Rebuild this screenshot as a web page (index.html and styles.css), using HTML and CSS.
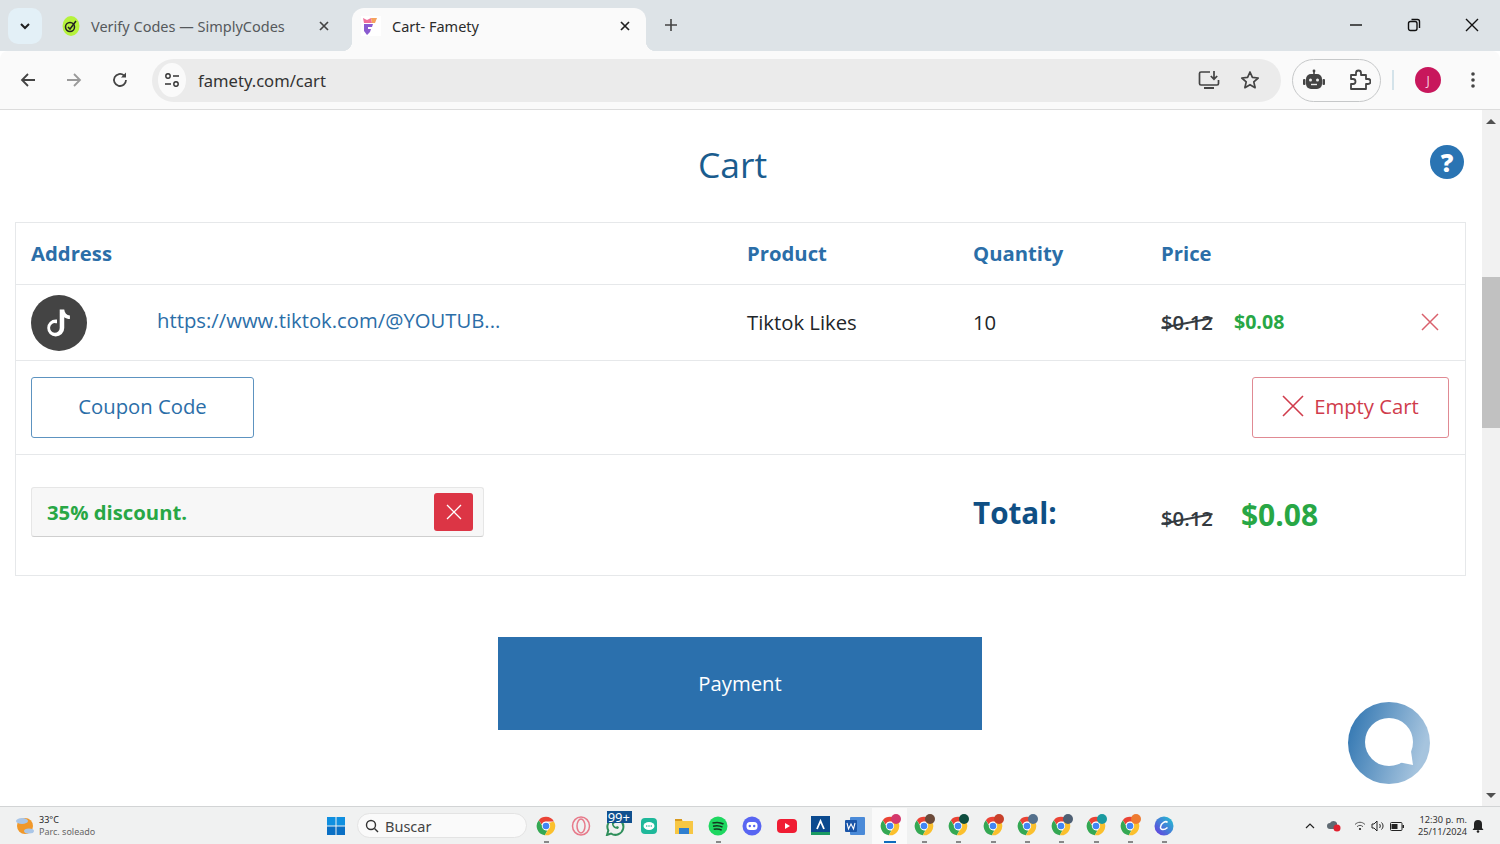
FILE: index.html
```html
<!DOCTYPE html>
<html lang="en">
<head>
    <meta charset="UTF-8">
    <meta name="viewport" content="width=device-width, initial-scale=1.0">
    <title>Cart- Famety</title>
    <link rel="stylesheet" href="styles.css">
</head>
<body>
    <svg class="defs" width="0" height="0">
        <symbol id="chrome" viewBox="0 0 24 24">
            <path fill="#ea4335" d="M12 1a11 11 0 0 1 9.5 5.5H12a5.5 5.5 0 0 0-5.2 3.7L3.4 5A11 11 0 0 1 12 1z"/>
            <path fill="#34a853" d="M3.4 5l4.9 8.6a4.5 4.5 0 0 0 5.3 3.8L10.6 23A11 11 0 0 1 3.4 5z"/>
            <path fill="#fbc02d" d="M21.5 6.500A11 11 0 0 1 10.600 23l4.800-8.400a4.500 4.500 0 0 0-.2-6.100z"/>
            <circle cx="12" cy="12" r="5" fill="#fff"/>
            <circle cx="12" cy="12" r="4" fill="#4285f4"/>
        </symbol>
    </svg>

    <!-- Tab strip -->
    <div class="tabstrip">
        <button class="tab-search">
            <svg width="12" height="12" viewBox="0 0 12 12"><path d="M2 4l4 4 4-4" fill="none" stroke="#1f1f1f" stroke-width="2"/></svg>
        </button>
        <div class="tab">
            <svg class="favicon" viewBox="0 0 20 20"><ellipse cx="10" cy="10" rx="8.500" ry="10" fill="#b5f23c"/><circle cx="9" cy="11" r="4.500" fill="none" stroke="#222" stroke-width="1.500"/><path d="M7 11l2 2 6-8" fill="none" stroke="#222" stroke-width="1.500"/></svg>
            <span class="tab-title">Verify Codes — SimplyCodes</span>
            <svg class="tab-close" viewBox="0 0 12 12"><path d="M2 2l8 8M10 2l-8 8" stroke="#444" stroke-width="1.700"/></svg>
        </div>
        <div class="tab active">
            <svg class="favicon" viewBox="0 0 20 20"><rect width="20" height="20" fill="#fff"/><path d="M3 8h9l-1 3H7v2h3l-1 3-3 3-3-4z" fill="#8a5bd0"/><path d="M2 2l4 2 4-2 1 5H3z" fill="#f0709a"/><path d="M10 2h6l-2 5h-3z" fill="#f5a25d"/></svg>
            <span class="tab-title">Cart- Famety</span>
            <svg class="tab-close" viewBox="0 0 12 12"><path d="M2 2l8 8M10 2l-8 8" stroke="#222" stroke-width="1.700"/></svg>
        </div>
        <svg class="new-tab" viewBox="0 0 14 14"><path d="M7 1v12M1 7h12" stroke="#444" stroke-width="1.600"/></svg>
        <div class="window-controls">
            <svg viewBox="0 0 14 14"><path d="M1 7h12" stroke="#111" stroke-width="1.400"/></svg>
            <svg viewBox="0 0 14 14"><rect x="1.500" y="3.500" width="8.500" height="9" rx="2" fill="none" stroke="#111" stroke-width="1.400"/><path d="M4.500 1.500h6a2 2 0 0 1 2 2v6.500" fill="none" stroke="#111" stroke-width="1.400"/></svg>
            <svg viewBox="0 0 14 14"><path d="M1 1l12 12M13 1L1 13" stroke="#111" stroke-width="1.400"/></svg>
        </div>
    </div>

    <!-- Toolbar -->
    <div class="toolbar">
        <svg class="nav-icon" viewBox="0 0 18 18"><path d="M16 9H3M9 3L3 9l6 6" fill="none" stroke="#444" stroke-width="1.800"/></svg>
        <svg class="nav-icon" viewBox="0 0 18 18"><path d="M2 9h13M9 3l6 6-6 6" fill="none" stroke="#9a9a9a" stroke-width="1.800"/></svg>
        <svg class="nav-icon" viewBox="0 0 18 18"><path d="M15 9a6 6 0 1 1-2-4.500" fill="none" stroke="#444" stroke-width="1.800"/><path d="M15 1.500v5h-5z" fill="#444"/></svg>
        <div class="omnibox">
            <span class="site-info">
                <svg width="16" height="16" viewBox="0 0 16 16"><circle cx="4" cy="4" r="2.200" fill="none" stroke="#333" stroke-width="1.400"/><path d="M9 4h6M1 12h6" stroke="#333" stroke-width="1.600"/><circle cx="12" cy="12" r="2.200" fill="none" stroke="#333" stroke-width="1.400"/></svg>
            </span>
            <span class="url">famety.com/cart</span>
            <svg class="omni-icon install" viewBox="0 0 22 20"><path d="M12 2H3a1.500 1.500 0 0 0-1.500 1.500v10A1.500 1.500 0 0 0 3 15h16a1.500 1.500 0 0 0 1.500-1.500V10" fill="none" stroke="#444" stroke-width="1.700"/><path d="M6 18h10" stroke="#444" stroke-width="2"/><path d="M16 1v8M12.800 6l3.200 3.200L19.200 6" fill="none" stroke="#444" stroke-width="1.700"/></svg>
            <svg class="omni-icon" viewBox="0 0 20 20"><path d="M10 2l2.400 5.400 5.800.6-4.400 3.900 1.300 5.800L10 14.700l-5.100 3 1.300-5.800L1.800 8l5.800-.6z" fill="none" stroke="#444" stroke-width="1.700" stroke-linejoin="round"/></svg>
        </div>
        <div class="ext-pill">
            <svg width="22" height="22" viewBox="0 0 22 22"><path d="M11 1v4" stroke="#444" stroke-width="1.600"/><circle cx="11" cy="2" r="1.400" fill="#444"/><rect x="3" y="5" width="16" height="15" rx="5" fill="#444"/><rect x="0" y="10" width="2.500" height="6" rx="1" fill="#444"/><rect x="19.500" y="10" width="2.500" height="6" rx="1" fill="#444"/><circle cx="7.500" cy="11" r="1.500" fill="#eee"/><circle cx="14.500" cy="11" r="1.500" fill="#eee"/><path d="M8 15.500h6" stroke="#eee" stroke-width="1.400"/></svg>
            <svg width="22" height="22" viewBox="0 0 22 22"><path d="M2 6h5V4a2.500 2.500 0 0 1 5 0v2h5v4h2a2.500 2.500 0 0 1 0 5h-2v5H2v-5h2a2.500 2.500 0 0 0 0-5H2z" fill="none" stroke="#444" stroke-width="1.800" stroke-linejoin="round"/></svg>
        </div>
        <span class="divider"></span>
        <span class="avatar">J</span>
        <svg class="menu-dots" viewBox="0 0 4 18"><circle cx="2" cy="3" r="1.800" fill="#444"/><circle cx="2" cy="9" r="1.800" fill="#444"/><circle cx="2" cy="15" r="1.800" fill="#444"/></svg>
    </div>

    <!-- Page -->
    <div class="viewport">
        <main class="page">
            <h1 class="page-title">Cart</h1>
            <a class="help" href="#">?</a>

            <div class="cart">
                <div class="row head">
                    <div>Address</div>
                    <div>Product</div>
                    <div>Quantity</div>
                    <div>Price</div>
                </div>
                <div class="row item">
                    <div class="address">
                        <span class="tiktok">
                            <svg width="34" height="34" viewBox="0 0 24 24"><path d="M12.500 2.500h3.200c.2 2.400 1.700 4 4 4.200v2.500c-1.500 0-2.900-.5-4-1.300v7.600a6 6 0 1 1-6-6h.9v2.600h-.9a3.400 3.400 0 1 0 2.800 3.400z" fill="#fff"/></svg>
                        </span>
                        <a class="link" href="#">https://www.tiktok.com/@YOUTUB...</a>
                    </div>
                    <div class="cell">Tiktok Likes</div>
                    <div class="cell">10</div>
                    <div class="cell price">
                        <span class="old-price">$0.12</span>
                        <span class="new-price">$0.08</span>
                        <svg class="remove" viewBox="0 0 20 20"><path d="M2 2l16 16M18 2L2 18" stroke="#d9606c" stroke-width="1.500"/></svg>
                    </div>
                </div>
                <div class="actions">
                    <button class="btn btn-coupon">Coupon Code</button>
                    <button class="btn btn-empty">
                        <svg width="22" height="22" viewBox="0 0 22 22"><path d="M1 1l20 20M21 1L1 21" stroke="#d03c4c" stroke-width="1.600"/></svg>
                        Empty Cart
                    </button>
                </div>
                <div class="row totals">
                    <div class="discount">
                        <span>35% discount.</span>
                        <button class="discount-x">
                            <svg width="16" height="16" viewBox="0 0 16 16"><path d="M1 1l14 14M15 1L1 15" stroke="#fff" stroke-width="1.300"/></svg>
                        </button>
                    </div>
                    <div></div>
                    <div class="total-label">Total:</div>
                    <div class="price total-price">
                        <span class="old-price">$0.12</span>
                        <span class="grand-price">$0.08</span>
                    </div>
                </div>
            </div>

            <button class="payment">Payment</button>

            <a class="chat" href="#">
                <svg width="82" height="82" viewBox="0 0 82 82">
                    <defs>
                        <linearGradient id="chatFill" x1="0" y1="0" x2="1" y2="0.300">
                            <stop offset="0" stop-color="#2b72af"/>
                            <stop offset="1" stop-color="#a6c4de"/>
                        </linearGradient>
                    </defs>
                    <circle cx="41" cy="41" r="41" fill="url(#chatFill)"/>
                    <circle cx="41" cy="40" r="24" fill="#fff"/>
                    <path d="M62 42l3 21-20-4z" fill="#fff"/>
                </svg>
            </a>
        </main>
        <div class="scrollbar">
            <span class="arrow-up"></span>
            <div class="track"><div class="thumb"></div></div>
            <span class="arrow-down"></span>
        </div>
    </div>

    <!-- Taskbar -->
    <footer class="taskbar">
        <div class="weather">
            <svg width="20" height="20" viewBox="0 0 20 20"><circle cx="10" cy="10" r="8" fill="#f0982a"/><ellipse cx="7" cy="5" rx="6" ry="3" fill="#a9c6e8"/><ellipse cx="14" cy="15" rx="5" ry="2.500" fill="#a9c6e8"/></svg>
            <div class="weather-text"><span class="temp">33°C</span><span>Parc. soleado</span></div>
        </div>
        <svg class="win-logo" viewBox="0 0 18 18"><g fill="#0f8fe0"><rect width="8.500" height="8.500"/><rect x="9.500" width="8.500" height="8.500"/><rect y="9.500" width="8.500" height="8.500" fill="#0a6fc4"/><rect x="9.500" y="9.500" width="8.500" height="8.500" fill="#0a6fc4"/></g></svg>
        <div class="search-box">
            <svg width="14" height="14" viewBox="0 0 14 14"><circle cx="6" cy="6" r="4.500" fill="none" stroke="#333" stroke-width="1.400"/><path d="M9.500 9.500L13 13" stroke="#333" stroke-width="1.400"/></svg>
            <span>Buscar</span>
        </div>
        <div class="task-icons">
            <span class="task-icon open"><svg width="20" height="20"><use href="#chrome"/></svg></span>
            <span class="task-icon"><svg width="20" height="20" viewBox="0 0 20 20"><ellipse cx="10" cy="10" rx="8.500" ry="9" fill="none" stroke="#e77a8a" stroke-width="1.500"/><ellipse cx="10" cy="10" rx="4" ry="7" fill="none" stroke="#e77a8a" stroke-width="1.500"/></svg></span>
            <span class="task-icon"><svg width="20" height="20" viewBox="0 0 20 20"><path d="M2 19l1.300-4.500A8 8 0 1 1 6 17.500z" fill="none" stroke="#2f8f5b" stroke-width="2"/><path d="M7 7c-.5 3 2.500 6 6 6l1-2-2-1-1 1c-1-.5-2-1.500-2.500-2.500l1-1-1-2z" fill="#2f8f5b"/></svg><b class="badge">99+</b></span>
            <span class="task-icon"><svg width="18" height="18" viewBox="0 0 18 18"><rect width="16" height="16" x="1" y="1" rx="4" fill="#1eb89a"/><ellipse cx="9" cy="9" rx="5.500" ry="4" fill="#fff"/><circle cx="6.700" cy="9" r=".8" fill="#1eb89a"/><circle cx="9" cy="9" r=".8" fill="#1eb89a"/><circle cx="11.300" cy="9" r=".8" fill="#1eb89a"/></svg></span>
            <span class="task-icon"><svg width="20" height="18" viewBox="0 0 20 18"><path d="M1 2h6l2 2h10v13H1z" fill="#f7c744"/><rect x="1" y="2" width="7" height="2" fill="#d99a1e"/><rect x="5" y="11" width="10" height="6" fill="#2f7fd0"/></svg></span>
            <span class="task-icon open"><svg width="20" height="20" viewBox="0 0 20 20"><circle cx="10" cy="10" r="9.500" fill="#1ed760"/><path d="M4.500 7c4-1 8-.7 11 1M5 10.200c3.500-.8 7-.5 9.500 1M5.700 13.200c3-.6 5.700-.4 8 .9" fill="none" stroke="#14341f" stroke-width="1.500"/></svg></span>
            <span class="task-icon"><svg width="20" height="20" viewBox="0 0 20 20"><circle cx="10" cy="10" r="9.500" fill="#5865f2"/><rect x="4.500" y="6" width="11" height="8" rx="3.500" fill="#fff"/><circle cx="7.800" cy="10" r="1.200" fill="#5865f2"/><circle cx="12.200" cy="10" r="1.200" fill="#5865f2"/></svg></span>
            <span class="task-icon"><svg width="20" height="14" viewBox="0 0 20 14"><rect width="20" height="14" rx="4" fill="#f01c33"/><path d="M8 4l5 3-5 3z" fill="#fff"/></svg></span>
            <span class="task-icon"><svg width="19" height="19" viewBox="0 0 19 19"><rect width="19" height="19" fill="#0b4a8f"/><rect y="16" width="19" height="3" fill="#1a9a62"/><path d="M6 13l3.500-8L13 13" fill="none" stroke="#fff" stroke-width="1.800"/></svg></span>
            <span class="task-icon"><svg width="20" height="18" viewBox="0 0 20 18"><rect x="5" y="0" width="15" height="18" rx="1" fill="#4a8ad8"/><rect x="0" y="3" width="12" height="12" rx="1" fill="#1a55a8"/><path d="M2 6l1.500 6L6 7l2.500 5L10 6" fill="none" stroke="#fff" stroke-width="1.100"/></svg></span>
            <span class="task-icon active"><svg width="20" height="20"><use href="#chrome"/></svg><i class="mini" style="background:#d4386c"></i></span>
            <span class="task-icon open"><svg width="20" height="20"><use href="#chrome"/></svg><i class="mini" style="background:#6b4a3a"></i></span>
            <span class="task-icon open"><svg width="20" height="20"><use href="#chrome"/></svg><i class="mini" style="background:#0e4d3f"></i></span>
            <span class="task-icon open"><svg width="20" height="20"><use href="#chrome"/></svg><i class="mini" style="background:#c8402a"></i></span>
            <span class="task-icon open"><svg width="20" height="20"><use href="#chrome"/></svg><i class="mini" style="background:#54708c"></i></span>
            <span class="task-icon open"><svg width="20" height="20"><use href="#chrome"/></svg><i class="mini" style="background:#4e5f73"></i></span>
            <span class="task-icon open"><svg width="20" height="20"><use href="#chrome"/></svg><i class="mini" style="background:#1a9aa0"></i></span>
            <span class="task-icon open"><svg width="20" height="20"><use href="#chrome"/></svg><i class="mini" style="background:#ee7a30"></i></span>
            <span class="task-icon open"><svg width="20" height="20" viewBox="0 0 20 20"><defs><linearGradient id="canva" x1="0" y1="1" x2="1" y2="0"><stop offset="0" stop-color="#6a35e0"/><stop offset="1" stop-color="#1ec8d0"/></linearGradient></defs><circle cx="10" cy="10" r="9.500" fill="url(#canva)"/><path d="M13.500 6.500C12 4.500 7 6.500 6.500 11c-.3 3 3.500 3.500 7 .5" fill="none" stroke="#fff" stroke-width="1.500"/></svg></span>
        </div>
        <div class="tray">
            <svg width="10" height="6" viewBox="0 0 10 6"><path d="M1 5l4-4 4 4" fill="none" stroke="#222" stroke-width="1.200"/></svg>
            <svg class="tray-cloud" width="14" height="12" viewBox="0 0 14 12"><path d="M3 9a3 3 0 0 1 0-6 4 4 0 0 1 7 0v6z" fill="#5f6a72"/><circle cx="10" cy="8" r="3.500" fill="#e0212f"/></svg>
            <svg class="tray-wifi" width="12" height="10" viewBox="0 0 12 10"><path d="M1 3.500c3-3 7-3 10 0M3 5.700c2-1.800 4-1.800 6 0" fill="none" stroke="#555" stroke-width="1"/><circle cx="6" cy="8" r="1.100" fill="#222"/></svg>
            <svg class="tray-next" width="14" height="12" viewBox="0 0 14 12"><path d="M1 4h2l3-3v10L3 8H1z" fill="none" stroke="#222"/><path d="M8.500 4c1 1 1 3 0 4M10.500 2.500c2 2 2 5 0 7" fill="none" stroke="#222"/></svg>
            <svg class="tray-next" width="14" height="10" viewBox="0 0 14 10"><rect x=".5" y="1.500" width="11.500" height="8" rx="1" fill="none" stroke="#222"/><rect x="1.500" y="3" width="6" height="5" fill="#222"/><rect x="12.500" y="4" width="1.500" height="3" fill="#222"/></svg>
            <div class="clock"><span>12:30 p. m.</span><span>25/11/2024</span></div>
            <svg class="tray-next" width="12" height="14" viewBox="0 0 12 14"><path d="M6 1a4 4 0 0 0-4 4v4l-1.500 2h11L10 9V5a4 4 0 0 0-4-4z" fill="#222"/><circle cx="6" cy="12.500" r="1.300" fill="#222"/></svg>
        </div>
    </footer>
</body>
</html>
```

FILE: styles.css
```css
/* General Reset */
* {
    margin: 0;
    padding: 0;
    box-sizing: border-box;
}

html, body {
    height: 100%;
    overflow: hidden;
}

body {
    display: flex;
    flex-direction: column;
    font-family: 'Open Sans', sans-serif;
    background: #fff;
    color: #212529;
}

button {
    font-family: inherit;
    cursor: pointer;
    background: none;
    border: none;
}

a {
    text-decoration: none;
}

.defs {
    position: absolute;
}

/* Tab strip */
.tabstrip {
    height: 51px;
    flex: none;
    display: flex;
    align-items: flex-end;
    padding-left: 8px;
    background: #dde3e7;
    font-family: 'Noto Sans', sans-serif;
}

.tab-search {
    width: 34px;
    height: 36px;
    margin-bottom: 7px;
    border-radius: 10px;
    background: #e3f0f7;
    display: flex;
    align-items: center;
    justify-content: center;
}

.tab {
    width: 292px;
    height: 43px;
    margin-left: 10px;
    display: flex;
    align-items: center;
    gap: 10px;
    padding: 0 14px 7px 9px;
    font-size: 14.500px;
    color: #55595c;
    position: relative;
}

.tab.active {
    width: 294px;
    margin-left: 8px;
    background: #fafafa;
    color: #2b2b2b;
    border-radius: 12px 12px 0 0;
    padding-left: 9px;
    padding-right: 15px;
    gap: 11px;
}

.tab.active::before,
.tab.active::after {
    content: '';
    position: absolute;
    bottom: 0;
    width: 10px;
    height: 10px;
}

.tab.active::before {
    left: -10px;
    background: radial-gradient(circle at 0 0, #dde3e7 10px, #fafafa 10.500px);
}

.tab.active::after {
    right: -10px;
    background: radial-gradient(circle at 100% 0, #dde3e7 10px, #fafafa 10.500px);
}

.favicon {
    width: 20px;
    height: 20px;
    flex: none;
}

.tab-title {
    flex: 1;
    white-space: nowrap;
}

.tab-close {
    width: 12px;
    height: 12px;
    flex: none;
}

.new-tab {
    width: 14px;
    height: 14px;
    margin: 0 0 19px 18px;
}

.window-controls {
    margin-left: auto;
    margin-bottom: 19px;
    margin-right: 21px;
    display: flex;
    gap: 44px;
}

.window-controls svg {
    width: 14px;
    height: 14px;
}

/* Toolbar */
.toolbar {
    height: 59px;
    flex: none;
    display: flex;
    align-items: center;
    padding: 0 19px 0 19px;
    background: #fafafa;
    border-bottom: 1px solid #dcdcdc;
    border-radius: 8px 8px 0 0;
}

.nav-icon {
    width: 18px;
    height: 18px;
    margin-right: 28px;
    flex: none;
}

.omnibox {
    width: 1129px;
    height: 43px;
    margin-left: -5px;
    display: flex;
    align-items: center;
    padding: 0 21px 0 6px;
    border-radius: 22px;
    background: #ebebeb;
}

.site-info {
    width: 28px;
    height: 34px;
    border-radius: 50%;
    background: #fafafa;
    display: flex;
    align-items: center;
    justify-content: center;
}

.url {
    margin-left: 12px;
    flex: 1;
    font-size: 16.600px;
    font-family: 'Noto Sans', sans-serif;
    color: #333;
}

.omni-icon {
    width: 20px;
    height: 20px;
}

.install {
    width: 22px;
    margin-right: 20px;
}

.ext-pill {
    width: 89px;
    height: 43px;
    margin-left: 11px;
    flex: none;
    border: 1px solid #c6c8c9;
    border-radius: 22px;
    display: flex;
    align-items: center;
    justify-content: space-between;
    padding: 0 9px 0 10px;
}

.divider {
    width: 2px;
    height: 20px;
    margin-left: 11px;
    background: #d4e3ea;
    flex: none;
}

.avatar {
    width: 26px;
    height: 26px;
    margin-left: 21px;
    flex: none;
    border-radius: 50%;
    background: #c8175c;
    color: #f6d5e2;
    font-size: 12px;
    display: flex;
    align-items: center;
    justify-content: center;
}

.menu-dots {
    width: 4px;
    height: 18px;
    margin-left: 30px;
    flex: none;
}

/* Page */
.viewport {
    flex: 1;
    min-height: 0;
    display: flex;
}

.page {
    flex: 1;
    position: relative;
    padding: 0 16px 0 15px;
}

.page-title {
    margin-top: 29px;
    height: 83px;
    padding-right: 16px;
    font-size: 35.500px;
    font-weight: 400;
    line-height: 50px;
    text-align: center;
    color: #1a5c8e;
}

.help {
    position: absolute;
    top: 35px;
    right: 18px;
    width: 34px;
    height: 34px;
    border-radius: 50%;
    background: #2a74b3;
    color: #fff;
    font-size: 25px;
    font-weight: 800;
    line-height: 34px;
    text-align: center;
}

/* Cart table */
.cart {
    width: 1451px;
    border: 1px solid #e6e8ea;
}

.row {
    display: grid;
    grid-template-columns: 716px 226px 188px 1fr;
    align-items: center;
    padding: 0 15px;
}

.head {
    height: 62px;
    padding-bottom: 2px;
    font-size: 20.300px;
    font-weight: 700;
    color: #2b6ea8;
    border-bottom: 1px solid #e6e8ea;
}

.item {
    height: 76px;
    font-size: 20.300px;
    border-bottom: 1px solid #e6e8ea;
}

.cell {
    margin-top: -2px;
}

.address {
    display: flex;
    align-items: center;
    gap: 70px;
}

.tiktok {
    width: 56px;
    height: 56px;
    border-radius: 50%;
    background: #444;
    display: flex;
    align-items: center;
    justify-content: center;
}

.link {
    color: #2b6ea8;
    margin-top: -6px;
}

.price {
    display: flex;
    align-items: center;
}

.old-price {
    position: relative;
    font-size: 20.300px;
    font-weight: 600;
    color: #343a40;
}

.old-price::after {
    content: '';
    position: absolute;
    left: 0;
    right: 0;
    top: 50%;
    height: 2px;
    background: #343a40;
    transform: rotate(-11deg);
}

.new-price {
    margin-left: 21px;
    font-size: 19.600px;
    font-weight: 700;
    color: #28a745;
}

.remove {
    width: 20px;
    height: 20px;
    margin-left: auto;
    margin-right: 10px;
}

.actions {
    height: 94px;
    display: flex;
    align-items: center;
    justify-content: space-between;
    padding: 0 16px 1px 15px;
    border-bottom: 1px solid #e6e8ea;
}

.btn {
    height: 61px;
    padding-bottom: 2px;
    border-radius: 3px;
    background: #fff;
    font-size: 20.300px;
}

.btn-coupon {
    width: 223px;
    border: 1px solid #5d93c0;
    color: #2b6ea8;
}

.btn-empty {
    width: 197px;
    border: 1px solid #e08a93;
    color: #d03c4c;
    display: flex;
    align-items: center;
    justify-content: center;
    gap: 10px;
}

.totals {
    height: 120px;
    padding-bottom: 6px;
}

.discount {
    width: 453px;
    height: 50px;
    display: flex;
    align-items: center;
    justify-content: space-between;
    padding: 0 10px 0 15px;
    border: 1px solid #e6e6e6;
    border-bottom-color: #cfcfcf;
    border-radius: 3px;
    background: #f7f7f7;
    font-size: 20.300px;
    font-weight: 700;
    color: #28a745;
}

.discount-x {
    width: 39px;
    height: 38px;
    border-radius: 3px;
    background: #dc3545;
    display: flex;
    align-items: center;
    justify-content: center;
}

.total-label {
    font-size: 29.600px;
    font-weight: 700;
    color: #0f4f84;
}

.total-price {
    padding-top: 4px;
}

.total-price .old-price {
    margin-top: 8px;
}

.grand-price {
    margin-left: 28px;
    font-size: 30px;
    font-weight: 700;
    color: #28a745;
}

.payment {
    display: block;
    width: 484px;
    height: 93px;
    margin: 61px 0 0 483px;
    padding-bottom: 2px;
    background: #2b70ad;
    color: #fff;
    font-size: 20.300px;
}

.chat {
    position: absolute;
    left: 1348px;
    top: 592px;
}

/* Scrollbar */
.scrollbar {
    width: 18px;
    flex: none;
    display: flex;
    flex-direction: column;
    align-items: center;
    background: #f1f1f1;
}

.arrow-up,
.arrow-down {
    width: 0;
    height: 0;
    margin: 8px 0;
    border-left: 5px solid transparent;
    border-right: 5px solid transparent;
}

.arrow-up {
    margin-top: 9px;
    border-bottom: 5px solid #505050;
}

.arrow-down {
    border-top: 5px solid #505050;
}

.track {
    flex: 1;
    width: 100%;
}

.thumb {
    height: 151px;
    margin-top: 145px;
    background: #c1c1c1;
}

/* Taskbar */
.taskbar {
    height: 38px;
    flex: none;
    display: flex;
    align-items: center;
    padding-left: 15px;
    background: #f0f1f1;
    border-top: 1px solid #d2d4d5;
    font-family: 'Noto Sans', sans-serif;
}

.weather {
    width: 312px;
    display: flex;
    align-items: center;
    gap: 4px;
    font-size: 9px;
    color: #666;
}

.weather-text {
    display: flex;
    flex-direction: column;
    line-height: 12px;
}

.temp {
    color: #222;
}

.win-logo {
    width: 18px;
    height: 18px;
    flex: none;
}

.search-box {
    width: 170px;
    height: 25px;
    margin-left: 12px;
    flex: none;
    display: flex;
    align-items: center;
    gap: 6px;
    padding-left: 7px;
    border-radius: 13px;
    background: #fafafa;
    border: 1px solid #e3e3e3;
    font-size: 14.500px;
    color: #444;
}

.task-icons {
    display: flex;
    margin-left: 2px;
    flex: none;
}

.task-icon {
    position: relative;
    width: 34.350px;
    height: 36px;
    display: flex;
    align-items: center;
    justify-content: center;
}

.task-icon.open::after,
.task-icon.active::after {
    content: '';
    position: absolute;
    bottom: 1px;
    left: 50%;
    width: 5px;
    height: 2px;
    margin-left: -2px;
    background: #888;
}

.task-icon.active {
    background: #fafafa;
}

.task-icon.active::after {
    width: 12px;
    margin-left: -6px;
    background: #0f6cbd;
}

.badge {
    position: absolute;
    top: 3px;
    left: 9px;
    width: 25px;
    padding-left: 1px;
    background: #10508f;
    color: #fff;
    font-size: 13px;
    font-weight: 400;
    line-height: 12px;
}

.mini {
    position: absolute;
    top: 6px;
    right: 6px;
    width: 10px;
    height: 10px;
    border-radius: 50%;
}

.tray {
    margin-left: auto;
    margin-right: 16px;
    display: flex;
    align-items: center;
}

.tray-cloud {
    margin-left: 12px;
}

.tray-wifi {
    margin-left: 13px;
}

.tray-next {
    margin-left: 5px;
}

.clock {
    display: flex;
    flex-direction: column;
    align-items: flex-end;
    margin-left: 14px;
    font-size: 9.200px;
    line-height: 12px;
    color: #333;
}
```
